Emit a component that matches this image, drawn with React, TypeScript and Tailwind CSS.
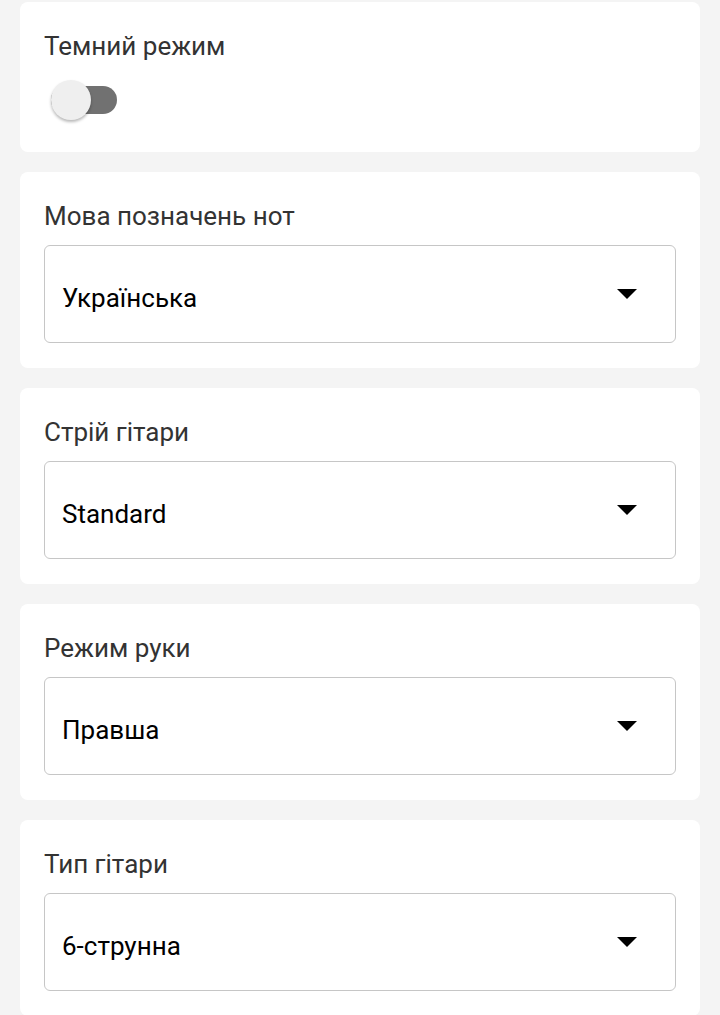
import { useState } from "react";

interface SelectCardProps {
  label: string;
  value: string;
}

function SelectCard({ label, value }: SelectCardProps) {
  return (
    <div className="rounded-lg bg-white px-6 pt-[28px] pb-[25px]">
      <div className="text-[26px] leading-[32px] text-[#333333]">{label}</div>
      <div className="mt-[13px] flex h-[98px] items-center justify-between rounded-[6px] border border-[#c6c6c6] pl-[17px] pr-[38px] pt-[7px]">
        <span className="text-[26px] leading-[32px] text-black">{value}</span>
        <svg width="20" height="10" viewBox="0 0 20 10" className="-mt-[7px]">
          <path d="M0 0 L20 0 L10 10 Z" fill="#000" />
        </svg>
      </div>
    </div>
  );
}

export default function App() {
  const [dark, setDark] = useState(false);

  return (
    <div
      className="min-h-[1015px] bg-[#f4f4f4] px-5 pt-[2px]"
      style={{ fontFamily: "Roboto, 'Noto Sans', sans-serif" }}
    >
      <div className="flex flex-col gap-5">
        {/* Dark mode */}
        <div className="h-[150px] rounded-lg bg-white px-6 pt-[28px]">
          <div className="text-[26px] leading-[32px] text-[#333333]">
            Темний режим
          </div>
          <button
            type="button"
            onClick={() => setDark(!dark)}
            className="relative mt-[18px] ml-[7px] block h-10 w-[66px]"
          >
            <span className="absolute left-0 top-[6px] h-[28px] w-[66px] rounded-full bg-[#717171]" />
            <span className="absolute left-0 top-0 h-10 w-10 rounded-full bg-[#efefef] shadow-[0_2px_3px_rgba(0,0,0,0.28)]" />
          </button>
        </div>

        <SelectCard label="Мова позначень нот" value="Українська" />
        <SelectCard label="Стрій гітари" value="Standard" />
        <SelectCard label="Режим руки" value="Правша" />
        <SelectCard label="Тип гітари" value="6-струнна" />
      </div>
    </div>
  );
}
